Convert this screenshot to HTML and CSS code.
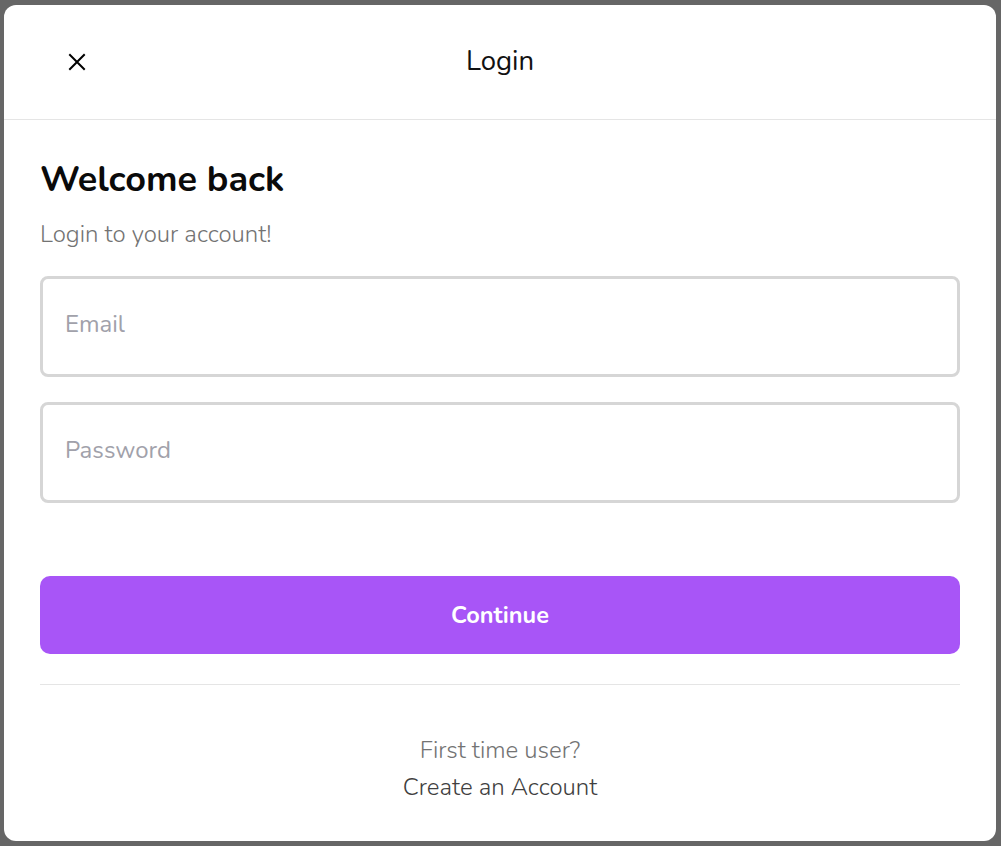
FILE: index.html
```html
<!DOCTYPE html>
<html lang="en">
<head>
<meta charset="utf-8">
<title>Login</title>
<link rel="stylesheet" href="styles.css">
</head>
<body>
<div class="modal">
  <header class="modal-header">
    <button class="close-btn" aria-label="Close">
      <svg width="18" height="18" viewBox="0 0 18 18"><path d="M2 2 L16 16 M16 2 L2 16" stroke="#000" stroke-width="2" fill="none" stroke-linecap="square"/></svg>
    </button>
    <div class="modal-title">Login</div>
  </header>
  <main class="modal-body">
    <h1 class="heading">Welcome back</h1>
    <p class="subtitle">Login to your account!</p>
    <form class="form">
      <input class="field" type="email" placeholder="Email">
      <input class="field" type="password" placeholder="Password">
      <button type="button" class="continue">Continue</button>
    </form>
    <div class="divider"></div>
    <div class="footer">
      <div class="first">First time user?</div>
      <div class="create">Create an Account</div>
    </div>
  </main>
</div>
</body>
</html>
```
FILE: styles.css
```css
* { box-sizing: border-box; }
html, body { margin: 0; height: 100%; }
body {
  background: #666666;
  padding: 5px 5px 5px 4px;
  font-family: "Nunito", "Lato", "Open Sans", sans-serif;
}
.modal {
  background: #fff;
  width: 992px;
  height: 836px;
  border-radius: 12px;
  overflow: hidden;
}
.modal-header {
  height: 115px;
  border-bottom: 1px solid #e5e5e5;
  display: flex;
  align-items: center;
  justify-content: center;
  position: relative;
}
.close-btn {
  position: absolute;
  left: 64px;
  top: 48px;
  background: none;
  border: 0;
  padding: 0;
  width: 18px;
  height: 18px;
  cursor: pointer;
}
.close-btn svg { display: block; }
.modal-title {
  font-size: 27.5px;
  color: #111;
  margin-top: -2px;
}
.modal-body {
  padding: 0 36px;
}
.heading {
  margin: 38px 0 0;
  font-size: 36px;
  font-weight: 700;
  line-height: 44px;
  color: #0a0a0a;
}
.subtitle {
  margin: 16px 0 0;
  font-size: 24px;
  font-weight: 300;
  line-height: 32px;
  color: #737373;
}
.form {
  margin-top: 26px;
  display: flex;
  flex-direction: column;
}
.field {
  height: 101px;
  border: 3px solid #d6d6d6;
  border-radius: 8px;
  padding: 0 22px 5px;
  font-family: inherit;
  font-size: 24px;
  color: #333;
  outline: none;
}
.field + .field { margin-top: 25px; }
.field::placeholder { color: #a1a1aa; }
.continue {
  margin-top: 73px;
  height: 78px;
  border: 0;
  border-radius: 10px;
  background: #a855f7;
  color: #fff;
  font-family: inherit;
  font-size: 23.5px;
  font-weight: 700;
}
.divider {
  margin-top: 30px;
  height: 1px;
  background: #e5e5e5;
}
.footer {
  margin-top: 47px;
  text-align: center;
  font-size: 24px;
  font-weight: 300;
  line-height: 37px;
}
.first { color: #737373; }
.create { color: #404040; }
```
